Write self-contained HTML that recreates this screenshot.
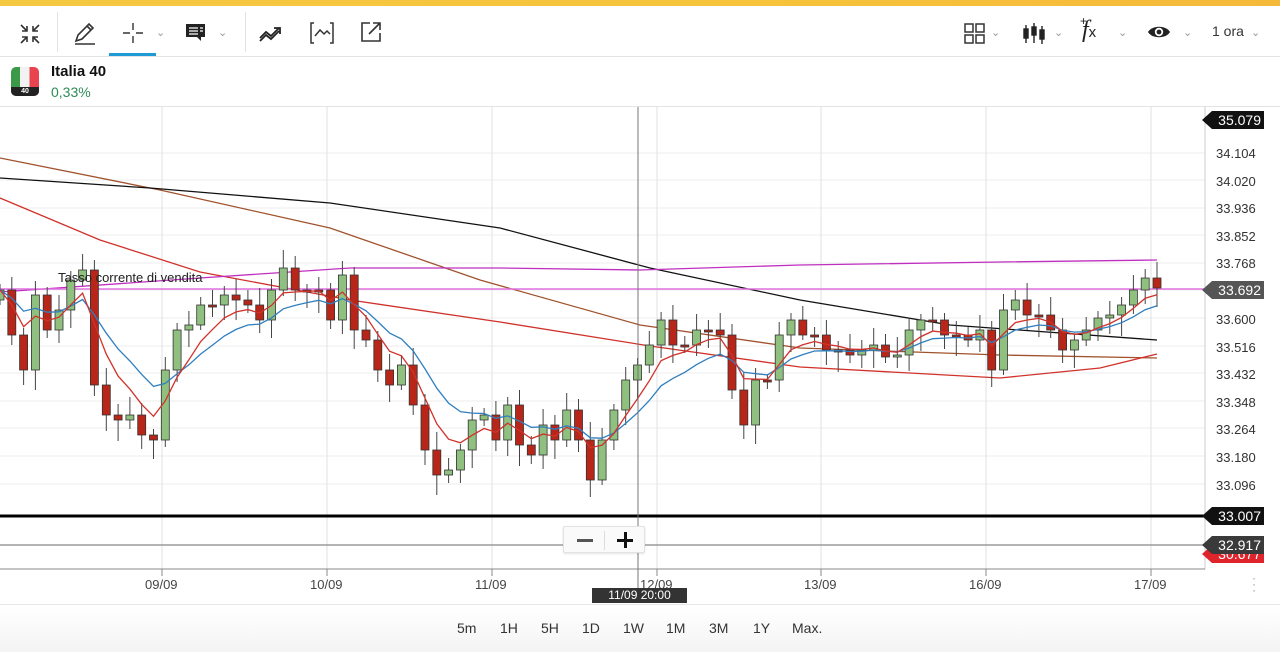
<!DOCTYPE html>
<html><head><meta charset="utf-8"><style>
*{margin:0;padding:0;box-sizing:border-box}
body{width:1280px;height:652px;overflow:hidden;background:#fff;font-family:"Liberation Sans",sans-serif;position:relative}
.top{position:absolute;left:0;top:0;width:1280px;height:6px;background:linear-gradient(90deg,#f5c842,#f6c33a 60%,#f5b93a)}
.tb{position:absolute;top:6px;left:0;width:1280px;height:51px;border-bottom:1px solid #e3e3e3}
.ic{position:absolute}
.chev{position:absolute;font-size:11px;color:#999}
.hdr{position:absolute;top:58px;left:0;width:1280px;height:49px;border-bottom:1px solid #e3e3e3}
.ax{position:absolute;left:1216px;font-size:13px;color:#333}
.tag{position:absolute;left:1212px;width:52px;height:18px;color:#fff;font-size:14px;line-height:18px;text-align:right;padding-right:3px}
.tag:before{content:"";position:absolute;left:-10px;top:0;border-right:10px solid;border-right-color:inherit;border-top:9px solid transparent;border-bottom:9px solid transparent}
.dl{position:absolute;top:577px;font-size:13px;color:#444}
.foot{position:absolute;top:604px;left:0;width:1280px;height:48px;background:linear-gradient(#fff,#f4f4f4);border-top:1px solid #e6e6e6}
.foot span{position:absolute;top:15px;font-size:14px;color:#333}
</style></head><body>
<div class="top"></div>
<div class="tb">
 <svg class="ic" style="left:18px;top:16px" width="24" height="24" viewBox="0 0 24 24" fill="none" stroke="#333" stroke-width="1.6"><path d="M3 3l6 6M9 4v5H4M21 3l-6 6M15 4v5h5M3 21l6-6M4 15h5v5M21 21l-6-6M20 15h-5v5"/></svg>
 <div style="position:absolute;left:57px;top:6px;width:1px;height:40px;background:#e3e3e3"></div>
 <svg class="ic" style="left:72px;top:15px" width="26" height="26" viewBox="0 0 26 26" fill="none" stroke="#333" stroke-width="1.6"><path d="M4 20l2-6L17 3l4 4-11 11-6 2zM15 5l4 4M3 23h20"/></svg>
 <svg class="ic" style="left:121px;top:15px" width="24" height="24" viewBox="0 0 24 24" stroke="#333" stroke-width="1.4"><path d="M12 2v7M12 15v7M2 12h7M15 12h7"/></svg>
 <span class="chev" style="left:156px;top:20px">&#8964;</span>
 <div style="position:absolute;left:109px;top:47px;width:47px;height:3px;background:#1e9ad6"></div>
 <svg class="ic" style="left:185px;top:17px" width="22" height="20" viewBox="0 0 22 20"><path d="M1 1h19v13h-4v4l-4-4H1z" fill="#222"/><path d="M4 5h9M4 8h9M4 11h9M15 5h3M15 8h3" stroke="#fff" stroke-width="1.2"/></svg>
 <span class="chev" style="left:218px;top:20px">&#8964;</span>
 <div style="position:absolute;left:245px;top:6px;width:1px;height:40px;background:#e3e3e3"></div>
 <svg class="ic" style="left:259px;top:18px" width="26" height="18" viewBox="0 0 26 18" fill="none" stroke="#222" stroke-width="1.8"><path d="M1 14l6-6 5 4 8-8M15 4h6v6M1 17l6-6 5 4 8-8"/></svg>
 <svg class="ic" style="left:309px;top:15px" width="26" height="24" viewBox="0 0 26 24" fill="none" stroke="#333" stroke-width="1.5"><path d="M5 2H2v20h3M21 2h3v20h-3M6 15l5-6 4 4 3-3 3 3"/></svg>
 <svg class="ic" style="left:360px;top:15px" width="22" height="22" viewBox="0 0 22 22" fill="none" stroke="#333" stroke-width="1.6"><path d="M10 2H2v18h18v-8M13 2h7v7M20 2L9 13"/></svg>
 <svg class="ic" style="left:964px;top:17px" width="22" height="22" viewBox="0 0 22 22" fill="none" stroke="#333" stroke-width="1.5"><rect x="1" y="1" width="8" height="8"/><rect x="12" y="1" width="8" height="8"/><rect x="1" y="12" width="8" height="8"/><rect x="12" y="12" width="8" height="8"/></svg>
 <span class="chev" style="left:991px;top:20px">&#8964;</span>
 <svg class="ic" style="left:1022px;top:15px" width="24" height="26" viewBox="0 0 24 26" fill="#222" stroke="#222" stroke-width="1.4"><path d="M4 4v18M12 2v20M20 5v18"/><rect x="2" y="8" width="4" height="9"/><rect x="10" y="6" width="4" height="8"/><rect x="18" y="9" width="4" height="9"/></svg>
 <span class="chev" style="left:1054px;top:20px">&#8964;</span>
 <div style="position:absolute;left:1082px;top:11px;font-family:'Liberation Serif',serif;font-style:italic;font-size:24px;color:#222">f<span style="font-style:normal;font-size:15px;font-family:'Liberation Sans'">x</span></div>
 <div style="position:absolute;left:1080px;top:8px;font-size:12px;color:#222">+</div>
 <span class="chev" style="left:1118px;top:20px">&#8964;</span>
 <svg class="ic" style="left:1147px;top:18px" width="24" height="16" viewBox="0 0 24 16"><path d="M1 8C5 1 19 1 23 8 19 15 5 15 1 8z" fill="#222"/><circle cx="12" cy="8" r="4.2" fill="#fff"/><circle cx="12" cy="8" r="2.4" fill="#222"/></svg>
 <span class="chev" style="left:1183px;top:20px">&#8964;</span>
 <div style="position:absolute;left:1212px;top:17px;font-size:14px;color:#333">1 ora</div>
 <span class="chev" style="left:1251px;top:20px">&#8964;</span>
</div>
<div class="hdr">
 <div style="position:absolute;left:11px;top:9px;width:28px;height:29px;border-radius:5px;overflow:hidden;background:linear-gradient(90deg,#3a9a48 0 33%,#f2f2f2 33% 66%,#e8434f 66%)"><div style="position:absolute;bottom:0;left:0;width:28px;height:9px;background:#222;color:#fff;font-size:7px;text-align:center;line-height:9px;font-weight:bold">40</div></div>
 <div style="position:absolute;left:51px;top:5px;font-size:15px;font-weight:bold;color:#111">Italia 40</div>
 <div style="position:absolute;left:51px;top:26px;font-size:14px;color:#2e8b57">0,33%</div>
</div>
<svg id="ch" style="position:absolute;left:0;top:0" width="1280" height="604"></svg>
<div class="ax" style="top:146px">34.104</div>
<div class="ax" style="top:174px">34.020</div>
<div class="ax" style="top:201px">33.936</div>
<div class="ax" style="top:229px">33.852</div>
<div class="ax" style="top:256px">33.768</div>
<div class="ax" style="top:312px">33.600</div>
<div class="ax" style="top:340px">33.516</div>
<div class="ax" style="top:367px">33.432</div>
<div class="ax" style="top:395px">33.348</div>
<div class="ax" style="top:422px">33.264</div>
<div class="ax" style="top:450px">33.180</div>
<div class="ax" style="top:478px">33.096</div>
<div class="tag" style="top:111px;background:#111;border-color:#111">35.079</div>
<div class="tag" style="top:281px;background:#555;border-color:#555">33.692</div>
<div class="tag" style="top:545px;background:#e0242c;border-color:#e0242c">30.677</div>
<div class="tag" style="top:507px;background:#111;border-color:#111">33.007</div>
<div class="tag" style="top:536px;background:#3a3a3a;border-color:#3a3a3a">32.917</div>
<div style="position:absolute;left:58px;top:270px;font-size:13px;color:#222">Tasso corrente di vendita</div>
<div class="dl" style="left:145px">09/09</div>
<div class="dl" style="left:310px">10/09</div>
<div class="dl" style="left:475px">11/09</div>
<div class="dl" style="left:640px">12/09</div>
<div class="dl" style="left:804px">13/09</div>
<div class="dl" style="left:969px">16/09</div>
<div class="dl" style="left:1134px">17/09</div>
<div style="position:absolute;left:1252px;top:575px;color:#999;font-size:12px;line-height:6px">·<br>·<br>·</div>
<div style="position:absolute;left:592px;top:588px;width:95px;height:15px;background:#333;color:#fff;font-size:12px;text-align:center;line-height:15px">11/09 20:00</div>
<div style="position:absolute;left:563px;top:526px;width:82px;height:27px;background:#fafafa;border:1px solid #e2e2e2;border-radius:2px;box-shadow:0 1px 2px rgba(0,0,0,.1)">
 <div style="position:absolute;left:13px;top:12px;width:16px;height:3px;background:#555"></div>
 <div style="position:absolute;left:40px;top:4px;width:1px;height:19px;background:#ddd"></div>
 <div style="position:absolute;left:53px;top:12px;width:16px;height:3px;background:#111"></div>
 <div style="position:absolute;left:60px;top:5px;width:3px;height:16px;background:#111"></div>
</div>
<div class="foot">
 <span style="left:457px">5m</span><span style="left:500px">1H</span><span style="left:541px">5H</span><span style="left:582px">1D</span><span style="left:623px">1W</span><span style="left:666px">1M</span><span style="left:709px">3M</span><span style="left:753px">1Y</span><span style="left:792px">Max.</span>
</div>
<script>
(function(){
var s=document.getElementById('ch'),h='';
function L(a,b,c,d,col,w){h+='<line x1="'+a+'" y1="'+b+'" x2="'+c+'" y2="'+d+'" stroke="'+col+'" stroke-width="'+(w||1)+'"/>';}
function P(pts,col,w){h+='<polyline fill="none" stroke="'+col+'" stroke-width="'+w+'" points="'+pts.map(function(p){return p.join(',')}).join(' ')+'"/>';}
[153,180,208,235,263,290,318,346,373,401,428,456,484].forEach(function(y){L(0,y,1205,y,'#ececec');});
[162,327,492,657,821,986,1151].forEach(function(x){L(x,107,x,569,'#e2e2e2');L(x,569,x,576,'#888');});
L(1205,107,1205,569,'#ccc');
L(0,569,1205,569,'#888');
L(0,545,1205,545,'#888',1.2);
L(0,516,1205,516,'#000',3);
P([[0,158],[160,190],[330,228],[480,280],[640,325],[800,348],[1000,355],[1157,358]],'#a0522d',1.3);
P([[0,178],[150,188],[330,203],[500,228],[650,268],[800,300],[950,325],[1157,340]],'#111',1.3);
P([[0,198],[100,240],[200,272],[350,300],[500,322],[650,346],[800,367],[1000,378],[1100,368],[1157,354]],'#d0322b',1.3);
P([[0,292],[200,278],[350,268],[500,268],[640,270],[800,265],[1000,262],[1157,260]],'#c030c0',1.3);
L(0,289,1205,289,'#e070e0',1.5);
var c=[290,335,370,295,330,310,280,270,385,415,420,415,435,440,370,330,325,305,305,295,300,305,320,290,268,290,290,290,320,275,330,340,370,385,365,405,450,475,470,450,420,415,440,405,445,455,425,440,410,440,480,440,410,380,365,345,320,345,345,330,330,335,390,425,380,380,335,320,335,335,350,350,355,350,345,357,355,330,320,320,335,335,340,330,370,310,300,315,315,330,350,340,330,318,315,305,290,278,288];
var n=c.length,dx=1157/(n-1),cand='',prev=300;
var e5=[],e10=[],a=c[0],b=c[0];
for(var i=0;i<n;i++){a+=(c[i]-a)*2/6;b+=(c[i]-b)*2/11;e5.push([(i*dx).toFixed(1),a.toFixed(1)]);e10.push([(i*dx).toFixed(1),b.toFixed(1)]);}
for(var i=0;i<n;i++){var x=(i*dx).toFixed(1),o=prev,cl=c[i];var t0=Math.min(o,cl),b0=Math.max(o,cl);if(b0-t0<2){b0=t0+2;}
var hi=t0-6-(i*7%13),lo=b0+5+(i*5%17);
var up=cl<o;cand+='<line x1="'+x+'" y1="'+hi+'" x2="'+x+'" y2="'+lo+'" stroke="#444" stroke-width="1"/>';
cand+='<rect x="'+(x-4)+'" y="'+t0+'" width="8" height="'+(b0-t0)+'" fill="'+(up?'#8fc07f':'#b8261a')+'" stroke="#333" stroke-width="0.8"/>';prev=cl;}
h+=cand;
P(e10,'#2f7fc0',1.3);P(e5,'#d0322b',1.3);
L(638,107,638,590,'#777',1);
s.innerHTML=h;
})();
</script>
</body></html>
